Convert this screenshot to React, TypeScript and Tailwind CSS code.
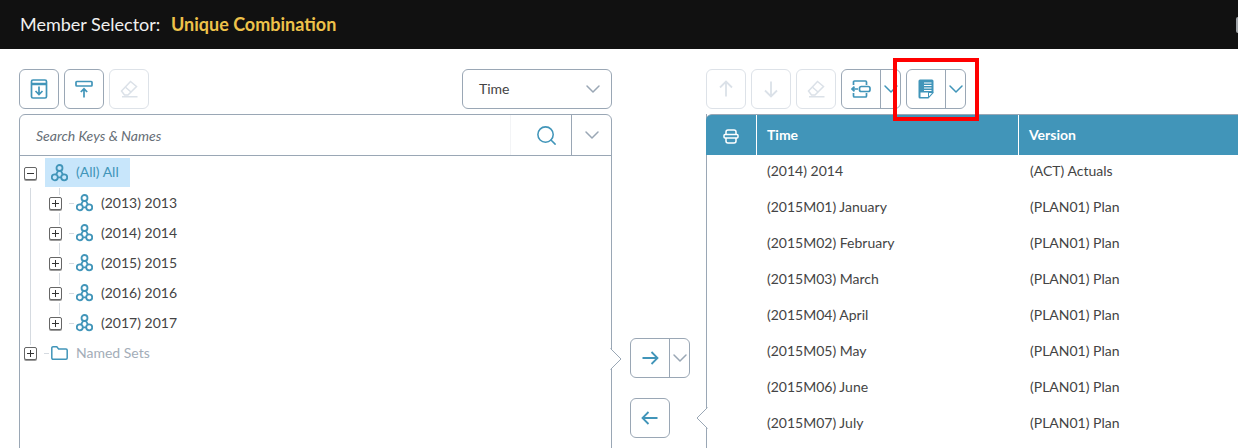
import { ChevronDown, Search } from "lucide-react";
import type { ReactNode } from "react";

const YEARS = ["2013", "2014", "2015", "2016", "2017"];

const ROWS = [
  ["(2014) 2014", "(ACT) Actuals"],
  ["(2015M01) January", "(PLAN01) Plan"],
  ["(2015M02) February", "(PLAN01) Plan"],
  ["(2015M03) March", "(PLAN01) Plan"],
  ["(2015M04) April", "(PLAN01) Plan"],
  ["(2015M05) May", "(PLAN01) Plan"],
  ["(2015M06) June", "(PLAN01) Plan"],
  ["(2015M07) July", "(PLAN01) Plan"],
];

function HierarchyIcon() {
  return (
    <svg width="17" height="18" viewBox="0 0 17 18" fill="none" stroke="#4195b9" strokeWidth="1.800">
      <circle cx="8.500" cy="4" r="3" />
      <circle cx="3.800" cy="13.300" r="3" />
      <circle cx="13.200" cy="13.300" r="3" />
      <path d="M7.200 6.700 5 10.600M9.800 6.700l2.200 3.900M6.700 13.300h3.600" />
    </svg>
  );
}

function FolderIcon() {
  return (
    <svg width="17" height="14" viewBox="0 0 17 14" fill="none" stroke="#4195b9" strokeWidth="1.500">
      <path d="M.8 2A1.200 1.200 0 0 1 2 .8h3.800L7.600 3H15a1.200 1.200 0 0 1 1.200 1.200V12a1.200 1.200 0 0 1-1.200 1.200H2A1.200 1.200 0 0 1 .8 12z" />
    </svg>
  );
}

function ExpandBox({ open }: { open?: boolean }) {
  return (
    <span className="relative block h-[13px] w-[13px] rounded-[2px] border border-[#666] bg-white shadow-[0_1px_0_#999]">
      <span className="absolute left-[2px] top-[5px] h-px w-[7px] bg-[#333]" />
      {!open && <span className="absolute left-[5px] top-[2px] h-[7px] w-px bg-[#333]" />}
    </span>
  );
}

function SquareButton({ children, disabled }: { children: ReactNode; disabled?: boolean }) {
  return (
    <div
      className={`flex h-10 w-10 items-center justify-center rounded-[6px] border ${
        disabled ? "border-[#dde2e8]" : "border-[#9aa7b5]"
      }`}
    >
      {children}
    </div>
  );
}

function SplitButton({ children, chevron = "#4195b9" }: { children: ReactNode; chevron?: string }) {
  return (
    <div className="flex h-10 w-[60px] rounded-[6px] border border-[#9aa7b5]">
      <div className="flex w-[39px] shrink-0 items-center justify-center border-r border-[#9aa7b5]">{children}</div>
      <div className="flex w-[19px] items-center justify-center">
        <ChevronDown size={24} strokeWidth={1.500} color={chevron} className="shrink-0" />
      </div>
    </div>
  );
}

function EraserIcon() {
  return (
    <svg width="20" height="20" viewBox="0 0 20 20" fill="none" stroke="#dbe1e8" strokeWidth="1.500">
      <path d="M2.500 12 11.500 2.500l6 5-8.500 8.500H5.500z" />
      <path d="M6.500 8.200l5.500 4.800M3 17.800h15.500" />
    </svg>
  );
}

function Arrow({ rotate, color }: { rotate: string; color: string }) {
  return (
    <svg width="18" height="18" viewBox="0 0 18 18" fill="none" stroke={color} strokeWidth="1.800" className={rotate}>
      <path d="M1.500 9h15M10.500 3l6 6-6 6" />
    </svg>
  );
}

function Notch({ side }: { side: "left" | "right" }) {
  return (
    <svg
      width="12"
      height="22"
      viewBox="0 0 12 22"
      fill="none"
      className={`absolute ${side === "right" ? "left-full -ml-px" : "right-full -mr-px"}`}
    >
      {side === "right" ? (
        <>
          <path d="M0 0 11 11 0 22z" fill="white" />
          <path d="M0.500 0.500 11 11 0.500 21.500" stroke="#9aa7b5" />
        </>
      ) : (
        <>
          <path d="M12 0 1 11 12 22z" fill="white" />
          <path d="M11.500 0.500 1 11 11.500 21.500" stroke="#9aa7b5" />
        </>
      )}
    </svg>
  );
}

export default function App() {
  return (
    <div className="relative h-[448px] w-[1238px] overflow-hidden bg-white font-['Lato',sans-serif] text-[14px] text-[#444]">
      <div className="flex h-[49px] items-center bg-[#111111] pb-px pl-5 text-[18px]">
        <span className="w-[151px] text-[#f0f0f0]">Member Selector:</span>
        <span className="font-bold text-[#eec24a]">Unique Combination</span>
      </div>
      <div className="absolute right-0 top-[17px] h-4 w-[2px] rounded-l-[2px] bg-[#a0a4a8]" />

      <div className="flex pl-[19px] pt-5">
        {/* member tree */}
        <div className="w-[593px] shrink-0">
          <div className="mb-[5px] flex gap-[5px]">
            <SquareButton>
              <svg width="18" height="20" viewBox="0 0 18 20" fill="none" stroke="#4195b9" strokeWidth="1.700">
                <rect x="1.500" y="1" width="15" height="18" rx="1.500" />
                <path d="M1.500 5h15" strokeWidth="2.500" />
                <path d="M9 7.500v8M5.500 12 9 15.500l3.500-3.500" />
              </svg>
            </SquareButton>
            <SquareButton>
              <svg width="18" height="18" viewBox="0 0 18 18" fill="none" stroke="#4195b9" strokeWidth="1.700">
                <rect x="1" y="1.500" width="16" height="4.500" rx="0.800" />
                <path d="M9 17.500V9M5.800 12 9 8.800l3.200 3.200" />
              </svg>
            </SquareButton>
            <SquareButton disabled>
              <EraserIcon />
            </SquareButton>
            <div className="ml-auto flex h-10 w-[150px] items-center justify-between rounded-[6px] border border-[#9aa7b5] pl-4 pr-[6px] text-[#444]">
              <span className="mb-[2px]">Time</span>
              <ChevronDown size={24} strokeWidth={1.500} color="#9aa7b5" />
            </div>
          </div>

          <div className="relative h-[400px] rounded-t-[6px] border border-[#9aa7b5]">
            <div className="absolute top-[233px] left-full z-10 flex">
              <Notch side="right" />
            </div>
            <div className="flex h-[41px] border-b border-[#9aa7b5]">
              <div className="flex-1 pl-4 pt-[10px] italic text-[#666e76]">Search Keys &amp; Names</div>
              <div className="flex w-[61px] items-center justify-center border-l border-[#f3f4f6] pl-[10px]">
                <Search size={23} strokeWidth={1.600} color="#4195b9" />
              </div>
              <div className="flex w-10 items-center justify-center border-l border-[#9aa7b5]">
                <ChevronDown size={24} strokeWidth={1.500} color="#9aa7b5" />
              </div>
            </div>

            <div className="relative pl-1 pt-[2px]">
              <div className="absolute left-[10px] top-[32px] h-[157px] w-px bg-[#d5dae0]" />
              <div className="flex h-[30px] items-start">
                <div className="mt-[9px]">
                  <ExpandBox open />
                </div>
                <div className="ml-2 flex h-[29px] w-[85px] items-center gap-2 bg-[#c8e6fb] pl-[6px] text-[#4195b9]">
                  <HierarchyIcon />
                  <span className="mb-[2px]">(All) All</span>
                </div>
              </div>
              {YEARS.map((y, i) => (
                <div key={y} className="relative flex h-[30px] items-center pl-[25px]">
                  <div className={`absolute left-[35px] w-px bg-[#d5dae0] ${i === 0 ? "top-0 h-[7px]" : "top-[-5px] h-3"}`} />
                  <div className="absolute left-[45px] top-[15px] h-px w-[5px] bg-[#d5dae0]" />
                  <ExpandBox />
                  <div className="ml-[14px] flex items-center gap-2">
                    <HierarchyIcon />
                    <span className="mb-[2px] text-[#444]">
                      ({y}) {y}
                    </span>
                  </div>
                </div>
              ))}
              <div className="relative flex h-[30px] items-center">
                <div className="absolute left-[20px] top-[15px] h-px w-[5px] bg-[#d5dae0]" />
                <ExpandBox />
                <div className="ml-[14px] flex items-center gap-2">
                  <FolderIcon />
                  <span className="mb-[2px] text-[#a3adb8]">Named Sets</span>
                </div>
              </div>
            </div>
          </div>
        </div>

        {/* move buttons */}
        <div className="w-[94px] shrink-0 pl-[18px] pt-[269px]">
          <SplitButton chevron="#9aa7b5">
            <Arrow rotate="" color="#4195b9" />
          </SplitButton>
          <div className="mt-5 flex h-10 w-10 items-center justify-center rounded-[6px] border border-[#9aa7b5]">
            <Arrow rotate="rotate-180" color="#4195b9" />
          </div>
        </div>

        {/* selected combinations */}
        <div className="relative w-[540px] shrink-0">
          <div className="mb-[5px] flex gap-[5px]">
            <SquareButton disabled>
              <Arrow rotate="-rotate-90" color="#dbe1e8" />
            </SquareButton>
            <SquareButton disabled>
              <Arrow rotate="rotate-90" color="#dbe1e8" />
            </SquareButton>
            <SquareButton disabled>
              <EraserIcon />
            </SquareButton>
            <SplitButton>
              <svg width="20" height="20" viewBox="0 0 20 20" fill="none" stroke="#4195b9" strokeWidth="1.700">
                <path d="M2.500 6V3a1 1 0 0 1 1-1h11a1 1 0 0 1 1 1v3M2.500 14v3a1 1 0 0 0 1 1h11a1 1 0 0 0 1-1v-3" />
                <rect x="8.500" y="7.500" width="10.500" height="5" rx="1.800" />
                <path d="M7 10H1M3.500 7.700 1 10l2.500 2.300" />
              </svg>
            </SplitButton>
            <SplitButton>
              <svg width="16" height="20" viewBox="0 0 16 20">
                <path d="M2 .5h12a1.500 1.500 0 0 1 1.500 1.500v12l-5 5.500H2A1.500 1.500 0 0 1 .5 18V2A1.500 1.500 0 0 1 2 .5z" fill="#4195b9" />
                <path d="M6 4h7.500M6 6.500h7.500M6 9h7.500M6 11.500h7.500" stroke="white" strokeWidth="1.200" />
                <path d="M2.500 13.500h7.500v4.500H2.500z" fill="white" />
                <path d="M10.500 18.500v-5h4.500z" fill="white" stroke="#4195b9" />
              </svg>
            </SplitButton>
          </div>
          <div className="pointer-events-none absolute left-[187px] top-[-11px] z-20 h-[63px] w-[86px] border-4 border-[#ff0000]" />

          <div className="relative h-[400px] border-l border-[#9aa7b5]">
            <div className="absolute left-0 top-[293px] z-10">
              <Notch side="left" />
            </div>
            <div className="-ml-px flex h-[41px] items-center rounded-tl-[6px] border-t border-[#9aa7b5] bg-[#4195b9] font-bold text-white">
              <div className="flex h-full w-[51px] items-center justify-center border-r border-white pt-[2px]">
                <svg width="16" height="15" viewBox="0 0 16 15" fill="none" stroke="white" strokeWidth="1.500">
                  <path d="M3 5.500V3a2 2 0 0 1 2-2h6a2 2 0 0 1 2 2v2.500" />
                  <rect x="1" y="5.500" width="14" height="3.500" rx="1" />
                  <path d="M3 9v3a2 2 0 0 0 2 2h6a2 2 0 0 0 2-2V9" />
                </svg>
              </div>
              <div className="flex h-full w-[262px] items-center border-r border-white pb-[2px] pl-[10px]">Time</div>
              <div className="h-full flex items-center pb-[2px] pl-[10px]">Version</div>
            </div>
            <div className="-mt-[3px]">
              {ROWS.map(([time, version]) => (
                <div key={time} className="flex h-9 items-center text-[#444]">
                  <div className="w-[60px]" />
                  <div className="w-[251px]">{time}</div>
                  <div className="pl-[12px]">{version}</div>
                </div>
              ))}
            </div>
          </div>
        </div>
      </div>
    </div>
  );
}
